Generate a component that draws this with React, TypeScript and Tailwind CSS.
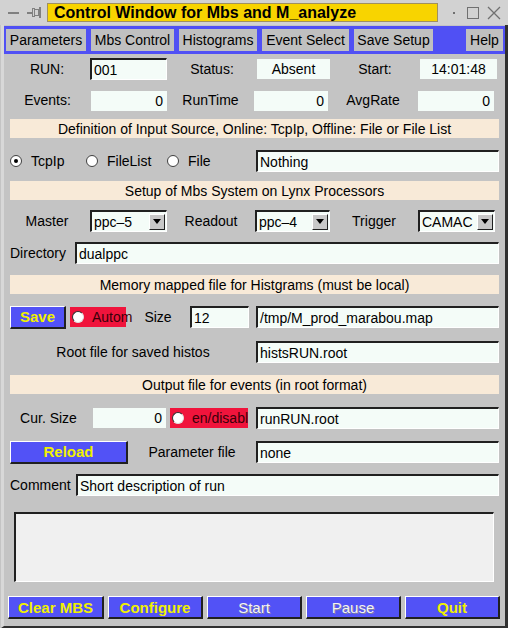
import React from "react";

const font = { fontFamily: '"Liberation Sans", Arial, sans-serif' };

function Sunken({ className = "", children }: { className?: string; children?: React.ReactNode }) {
  return (
    <div
      className={`h-[22px] border-t-2 border-l-2 border-b border-r border-t-[#202020] border-l-[#202020] border-b-white border-r-white bg-[#f4fcf8] flex items-center px-[2px] text-[14px] text-black leading-none ${className}`}
    >
      {children}
    </div>
  );
}

function Flat({ className = "", children }: { className?: string; children?: React.ReactNode }) {
  return (
    <div className={`h-[20px] bg-[#f4fcf8] flex items-center px-[4px] text-[14px] text-black leading-none ${className}`}>
      {children}
    </div>
  );
}

function Header({ children }: { children: React.ReactNode }) {
  return (
    <div className="h-[19px] mx-[6px] bg-[#f8ead8] flex items-center justify-center text-[14px] text-black leading-none">
      {children}
    </div>
  );
}

function Radio({ checked = false }: { checked?: boolean }) {
  return (
    <span className="w-[12px] h-[12px] rounded-full border border-[#404040] bg-white flex items-center justify-center shrink-0">
      {checked && <span className="w-[4px] h-[4px] rounded-full bg-black" />}
    </span>
  );
}

function Combo({ value, className = "" }: { value: string; className?: string }) {
  return (
    <Sunken className={`justify-between pr-[1px] ${className}`}>
      <span>{value}</span>
      <span className="w-[16px] h-[16px] bg-[#c8c8c8] border-t border-l border-b border-r border-t-white border-l-white border-b-[#202020] border-r-[#202020] flex items-center justify-center">
        <span className="w-0 h-0 border-l-[4px] border-r-[4px] border-t-[5px] border-l-transparent border-r-transparent border-t-black" />
      </span>
    </Sunken>
  );
}

function BlueButton({ children, className = "", disabled = false }: { children: React.ReactNode; className?: string; disabled?: boolean }) {
  return (
    <div
      className={`h-[23px] bg-[#5252f6] border-t border-l border-b-2 border-r-2 border-t-white border-l-white border-b-[#202020] border-r-[#202020] flex items-center justify-center font-bold text-[15px] leading-none ${
        disabled ? "text-[#f4f4f4] font-normal [text-shadow:1px_1px_0_#8080a0]" : "text-[#f0f000]"
      } ${className}`}
    >
      {children}
    </div>
  );
}

function Red({ children, className = "" }: { children: React.ReactNode; className?: string }) {
  return (
    <div className={`h-[20px] bg-[#f0143c] flex items-center gap-[8px] pl-[2px] text-[14px] text-[#3a0008] leading-none whitespace-nowrap ${className}`}>
      <span className="w-[12px] h-[12px] rounded-full border border-l-[#303030] border-t-[#303030] border-r-[#e0e0e0] border-b-[#e0e0e0] bg-white shrink-0" />
      {children}
    </div>
  );
}

export default function App() {
  const menu = [
    { label: "Parameters", w: "w-[80px]" },
    { label: "Mbs Control", w: "w-[83px]" },
    { label: "Histograms", w: "w-[78px]" },
    { label: "Event Select", w: "w-[87px]" },
    { label: "Save Setup", w: "w-[79px]" },
  ];

  return (
    <div style={font} className="w-[508px] h-[628px] bg-[#c4c4c4] flex flex-col text-black overflow-hidden">
      {/* title bar */}
      <div className="h-[25px] bg-[#d2d2d2] flex items-center shrink-0">
        <div className="w-[11px] h-[2px] bg-[#808080] ml-[8px]" />
        <div className="ml-[8px] flex items-center">
          <div className="w-[5px] h-[2px] bg-[#808080]" />
          <div className="w-[3px] h-[9px] border border-[#808080]" />
          <div className="w-[5px] h-[7px] border border-[#808080] -ml-[1px]" />
          <div className="w-[2px] h-[11px] bg-[#808080]" />
        </div>
        <div className="ml-[6px] w-[391px] h-[19px] bg-[#f8d400] border border-[#a09060] flex items-center pl-[6px] font-bold text-[16px] leading-none">
          Control Window for Mbs and M_analyze
        </div>
        <div className="ml-[15px] w-[2px] h-[2px] bg-[#707070]" />
        <div className="ml-[12px] w-[12px] h-[12px] border border-[#707070]" />
        <svg className="ml-[8px]" width="14" height="14" viewBox="0 0 14 14">
          <path d="M1 1 L13 13 M13 1 L1 13" stroke="#707070" strokeWidth="1.3" />
        </svg>
      </div>

      {/* frame */}
      <div className="flex-1 flex flex-col border-l-[3px] border-r-[3px] border-b-[2px] border-l-[#d8d8d8] border-r-[#303030] border-b-[#303030] ml-[1px]">
        {/* menu bar */}
        <div className="mt-[1px] h-[28px] bg-[#5050f4] flex items-center gap-[5px] px-[2px]">
          {menu.map((m) => (
            <div key={m.label} className={`${m.w} h-[22px] bg-[#c0c0c0] flex items-center justify-center text-[14px] leading-none`}>
              {m.label}
            </div>
          ))}
          <div className="flex-1" />
          <div className="w-[37px] h-[22px] bg-[#c0c0c0] flex items-center justify-center text-[14px] leading-none">Help</div>
        </div>

        <div className="flex flex-col text-[14px]">
          {/* RUN row */}
          <div className="mt-[4px] h-[22px] flex items-center">
            <div className="w-[86px] text-center">RUN:</div>
            <Sunken className="w-[77px]">001</Sunken>
            <div className="w-[90px] text-center">Status:</div>
            <Flat className="w-[73px] justify-center">Absent</Flat>
            <div className="w-[90px] text-center">Start:</div>
            <Flat className="w-[77px] justify-center">14:01:48</Flat>
          </div>

          {/* Events row */}
          <div className="mt-[10px] h-[21px] flex items-center">
            <div className="w-[87px] text-center">Events:</div>
            <Flat className="w-[76px] justify-end">0</Flat>
            <div className="w-[87px] text-center">RunTime</div>
            <Flat className="w-[74px] justify-end">0</Flat>
            <div className="w-[90px] text-center">AvgRate</div>
            <Flat className="w-[76px] justify-end">0</Flat>
          </div>

          <div className="mt-[8px]">
            <Header>Definition of Input Source, Online: TcpIp, Offline: File or File List</Header>
          </div>

          {/* radio row */}
          <div className="mt-[12px] h-[22px] flex items-center">
            <div className="w-[82px] pl-[6px] flex items-center gap-[9px]"><Radio checked />TcpIp</div>
            <div className="w-[81px] flex items-center gap-[9px]"><Radio />FileList</div>
            <div className="w-[89px] flex items-center gap-[9px]"><Radio />File</div>
            <Sunken className="w-[243px]">Nothing</Sunken>
          </div>

          <div className="mt-[9px]">
            <Header>Setup of Mbs System on Lynx Processors</Header>
          </div>

          {/* Master row */}
          <div className="mt-[10px] h-[22px] flex items-center">
            <div className="w-[86px] text-center">Master</div>
            <Combo value="ppc–5" className="w-[77px]" />
            <div className="w-[88px] text-center">Readout</div>
            <Combo value="ppc–4" className="w-[75px]" />
            <div className="w-[88px] text-center">Trigger</div>
            <Combo value="CAMAC" className="w-[77px]" />
          </div>

          {/* Directory */}
          <div className="mt-[10px] h-[22px] flex items-center">
            <div className="w-[71px] pl-[6px]">Directory</div>
            <Sunken className="w-[424px]">dualppc</Sunken>
          </div>

          <div className="mt-[11px]">
            <Header>Memory mapped file for Histgrams (must be local)</Header>
          </div>

          {/* Save row */}
          <div className="mt-[12px] h-[22px] flex items-center">
            <BlueButton className="ml-[6px] w-[56px]">Save</BlueButton>
            <Red className="ml-[4px] w-[56px]">Autom</Red>
            <div className="w-[64px] text-center">Size</div>
            <Sunken className="w-[59px]">12</Sunken>
            <div className="w-[7px]" />
            <Sunken className="w-[243px]">/tmp/M_prod_marabou.map</Sunken>
          </div>

          {/* Root row */}
          <div className="mt-[13px] h-[22px] flex items-center">
            <div className="w-[252px] text-center pl-[6px]">Root file for saved histos</div>
            <Sunken className="w-[243px]">histsRUN.root</Sunken>
          </div>

          <div className="mt-[12px]">
            <Header>Output file for events (in root format)</Header>
          </div>

          {/* Cur size row */}
          <div className="mt-[13px] h-[22px] flex items-center">
            <div className="w-[89px] text-center">Cur. Size</div>
            <Flat className="w-[73px] justify-end">0</Flat>
            <Red className="ml-[4px] w-[78px]">en/disabl</Red>
            <div className="w-[8px]" />
            <Sunken className="w-[243px]">runRUN.root</Sunken>
          </div>

          {/* Reload row */}
          <div className="mt-[12px] h-[22px] flex items-center">
            <BlueButton className="ml-[6px] w-[118px]">Reload</BlueButton>
            <div className="w-[128px] text-center">Parameter file</div>
            <Sunken className="w-[243px]">none</Sunken>
          </div>

          {/* Comment row */}
          <div className="mt-[11px] h-[22px] flex items-center">
            <div className="w-[72px] pl-[6px]">Comment</div>
            <Sunken className="w-[423px]">Short description of run</Sunken>
          </div>

          {/* text area */}
          <div className="mt-[16px] ml-[10px] w-[480px] h-[70px] bg-[#f0f0f0] border-t-2 border-l-2 border-b border-r border-t-[#202020] border-l-[#202020] border-b-white border-r-white" />

          {/* bottom buttons */}
          <div className="mt-[14px] flex items-center gap-[4px] pl-[4px]">
            <BlueButton className="w-[96px]">Clear MBS</BlueButton>
            <BlueButton className="w-[95px]">Configure</BlueButton>
            <BlueButton className="w-[95px]" disabled>Start</BlueButton>
            <BlueButton className="w-[95px]" disabled>Pause</BlueButton>
            <BlueButton className="w-[95px]">Quit</BlueButton>
          </div>
        </div>
      </div>
    </div>
  );
}
